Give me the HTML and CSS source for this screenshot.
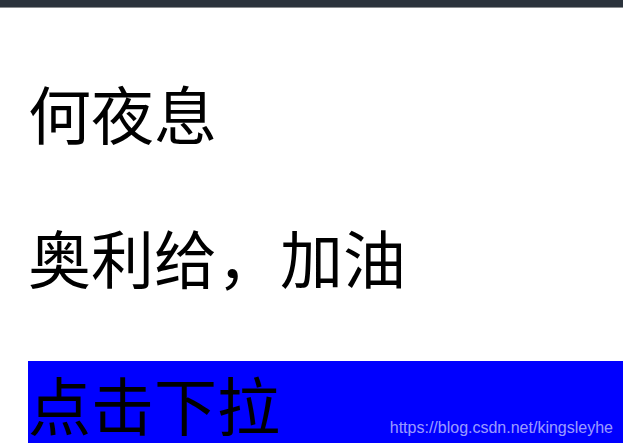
FILE: index.html
```html
<!DOCTYPE html>
<html lang="zh-CN">
<head>
<meta charset="utf-8">
<title>下拉</title>
<link rel="stylesheet" href="styles.css">
</head>
<body>
<div class="topbar"></div>
<main class="content">
  <p class="line line-first">何夜息</p>
  <p class="line line-second">奥利给，加油</p>
  <div class="dropdown">
    <p class="dropdown-label">点击下拉</p>
  </div>
</main>
<div class="watermark">https://blog.csdn.net/kingsleyhe</div>
</body>
</html>
```
FILE: styles.css
```css
html, body {
  margin: 0;
  padding: 0;
  background: #ffffff;
}
body {
  width: 623px;
  height: 448px;
  overflow: hidden;
  position: relative;
  font-family: "Noto Sans CJK SC", "Noto Sans", sans-serif;
  color: #000;
}
.topbar {
  height: 7px;
  background: #2b333c;
  border-bottom: 1px solid #8a8d90;
}
.content {
  padding-left: 28px;
}
.line {
  margin: 0;
  font-size: 63px;
  line-height: 82px;
  height: 82px;
}
.line-first {
  margin-top: 63px;
}
.line-second {
  margin-top: 62px;
}
.dropdown {
  margin-top: 64px;
  background: #0000ff;
  height: 82px;
}
.dropdown-label {
  margin: 0;
  padding-top: 3px;
  font-size: 63px;
  line-height: 78px;
}
.watermark {
  position: absolute;
  right: 10px;
  top: 418px;
  font-family: "Liberation Sans", Arial, sans-serif;
  font-size: 16px;
  line-height: 20px;
  color: rgba(255, 255, 255, 0.62);
}
```
